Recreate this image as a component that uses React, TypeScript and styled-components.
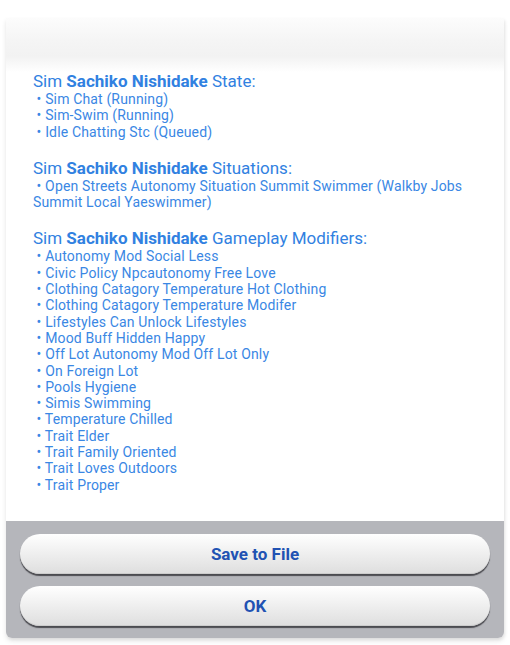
import React from "react";
import styled, { createGlobalStyle } from "styled-components";

const Global = createGlobalStyle`
  html, body { margin: 0; padding: 0; background: #ffffff; }
  body { font-family: Roboto, "Liberation Sans", sans-serif; }
`;

const Page = styled.div`
  width: 510px;
  height: 645px;
  padding: 18px 6px 0;
  box-sizing: border-box;
`;

const Panel = styled.div`
  display: flex;
  flex-direction: column;
  border-radius: 0 0 6px 6px;
  box-shadow: 0 3px 5px rgba(0, 0, 0, 0.1), 1px 2px 3px rgba(0, 0, 0, 0.05);
  overflow: hidden;
`;

const Content = styled.div`
  background: linear-gradient(#fcfcfc 0px, #f5f5f5 22px, #f2f2f2 38px, #ffffff 54px);
  padding: 53px 20px 28px 27px;
`;

const Section = styled.section`
  & + & {
    margin-top: 18px;
  }
`;

const Heading = styled.div`
  font-size: 17px;
  line-height: 20px;
  color: #3181e1;
  b { font-weight: 700; }
`;

const Item = styled.div`
  font-size: 14px;
  letter-spacing: 0.15px;
  line-height: 16.3px;
  color: #3a87e4;
`;

const Footer = styled.div`
  background: #b5b6bb;
  padding: 13px 14px 12px;
  display: flex;
  flex-direction: column;
  gap: 12px;
`;

const Button = styled.button`
  height: 40px;
  border: none;
  border-radius: 20px;
  background: linear-gradient(#ffffff, #dedede);
  box-shadow: 0 2px 1px rgba(40, 40, 45, 0.75), inset 0 -1px 0 rgba(0,0,0,0.08);
  font-family: Roboto, "Liberation Sans", sans-serif;
  font-weight: 700;
  font-size: 17px;
  color: #2152b3;
  cursor: pointer;
`;

const state = ["Sim Chat (Running)", "Sim-Swim (Running)", "Idle Chatting Stc (Queued)"];
const mods = [
  "Autonomy Mod Social Less",
  "Civic Policy Npcautonomy Free Love",
  "Clothing Catagory Temperature Hot Clothing",
  "Clothing Catagory Temperature Modifer",
  "Lifestyles Can Unlock Lifestyles",
  "Mood Buff Hidden Happy",
  "Off Lot Autonomy Mod Off Lot Only",
  "On Foreign Lot",
  "Pools Hygiene",
  "Simis Swimming",
  "Temperature Chilled",
  "Trait Elder",
  "Trait Family Oriented",
  "Trait Loves Outdoors",
  "Trait Proper",
];

export default function App() {
  return (
    <Page>
      <Global />
      <Panel>
        <Content>
          <Section>
            <Heading>Sim <b>Sachiko Nishidake</b> State:</Heading>
            {state.map((s) => (
              <Item key={s}>&nbsp;• {s}</Item>
            ))}
          </Section>
          <Section>
            <Heading>Sim <b>Sachiko Nishidake</b> Situations:</Heading>
            <Item>&nbsp;• Open Streets Autonomy Situation Summit Swimmer (Walkby Jobs Summit Local Yaeswimmer)</Item>
          </Section>
          <Section>
            <Heading>Sim <b>Sachiko Nishidake</b> Gameplay Modifiers:</Heading>
            {mods.map((s) => (
              <Item key={s}>&nbsp;• {s}</Item>
            ))}
          </Section>
        </Content>
        <Footer>
          <Button>Save to File</Button>
          <Button>OK</Button>
        </Footer>
      </Panel>
    </Page>
  );
}
